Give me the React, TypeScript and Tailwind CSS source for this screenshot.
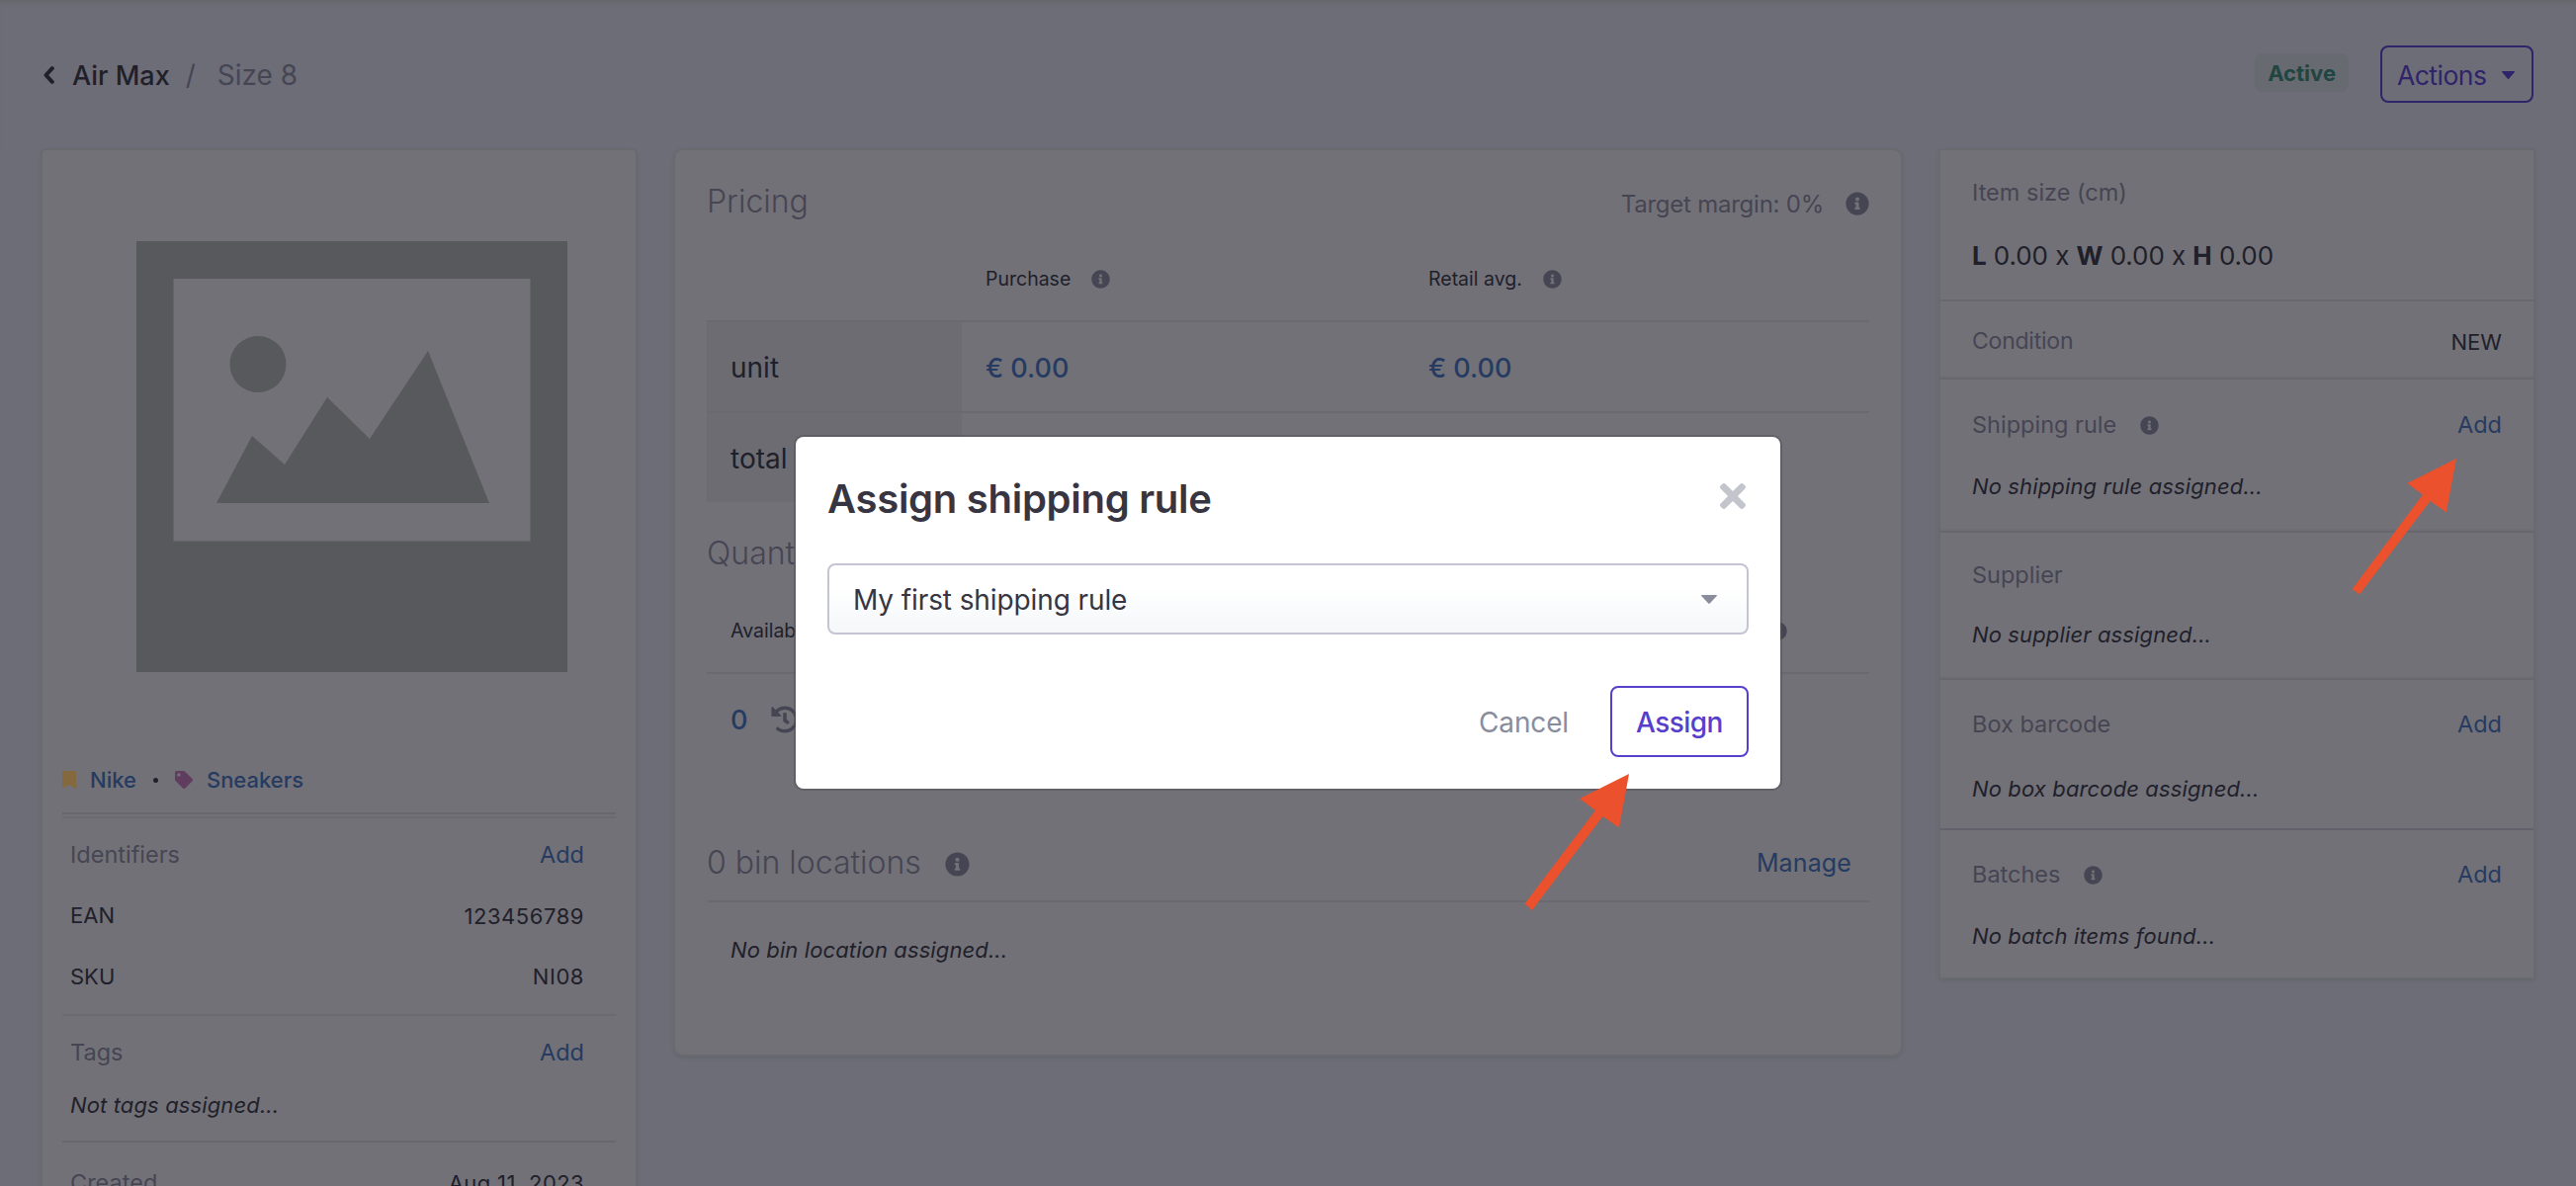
import type { ReactNode } from 'react'
import { FaHistory, FaInfoCircle, FaTag, FaTimes } from 'react-icons/fa'

type SideSection = {
  label: string
  text: string
  info?: boolean
  add?: boolean
  dividerClass: string
  labelClass: string
  textClass: string
}

const SIDE_SECTIONS: SideSection[] = [
  {
    label: 'Shipping rule',
    text: 'No shipping rule assigned...',
    info: true,
    add: true,
    dividerClass: 'h-1 border-t-2 border-[#6e6e74] bg-[#67676d]',
    labelClass: 'h-[90px]',
    textClass: 'mb-[26px] h-[35px]',
  },
  {
    label: 'Supplier',
    text: 'No supplier assigned...',
    dividerClass: 'h-1 border-t-2 border-[#6e6e74] bg-[#67676d]',
    labelClass: 'h-[84px]',
    textClass: 'mb-[23px] h-[38px]',
  },
  {
    label: 'Box barcode',
    text: 'No box barcode assigned...',
    add: true,
    dividerClass: 'h-1 border-t-2 border-[#6e6e74] bg-[#67676d]',
    labelClass: 'h-[88px]',
    textClass: 'mb-[19px] h-[43px]',
  },
  {
    label: 'Batches',
    text: 'No batch items found...',
    info: true,
    add: true,
    dividerClass: 'h-0.5 bg-[#62626d]',
    labelClass: 'h-[88px]',
    textClass: 'mb-[23px] h-[38px]',
  },
]

const CARD = 'bg-[#727177] shadow-[0_0_0_2px_#696a6e,0_2px_4px_rgba(60,60,66,0.3)]'

function Info({ className }: { className: string }) {
  return <FaInfoCircle className={`shrink-0 text-[#464553] ${className}`} />
}

function Label({ children, className = 'text-[23.5px]' }: { children: ReactNode; className?: string }) {
  return <span className={`leading-none text-[#464553] ${className}`}>{children}</span>
}

function Link({ children, className = 'text-[23.5px]' }: { children: ReactNode; className?: string }) {
  return (
    <a href="#" className={`leading-none text-[#263b61] ${className}`}>
      {children}
    </a>
  )
}

function Caret({ className }: { className: string }) {
  return (
    <svg viewBox="0 0 16 9" preserveAspectRatio="none" className={className} fill="currentColor">
      <path d="M0.6 0h14.8c0.5 0 0.8 0.6 0.4 1L8.7 8.6c-0.4 0.4-1 0.4-1.4 0L0.2 1c-0.4-0.4-0.1-1 0.4-1z" />
    </svg>
  )
}

function Bookmark() {
  return (
    <svg viewBox="0 0 14 18" className="h-[18px] w-[14px]" fill="#84693f">
      <path d="M0 18V1.500Q0 0 1.500 0h11Q14 0 14 1.500V18l-7-4z" />
    </svg>
  )
}

function Placeholder() {
  return (
    <svg viewBox="0 0 436 436" className="mt-[92px] ml-[95px] block size-[436px]">
      <path fill="#58595d" fillRule="evenodd" d="M0 0h436v436H0zM37.5 38v265.500h361V38z" />
      <circle cx="123" cy="124.500" r="28.500" fill="#58595d" />
      <path fill="#58595d" d="M81 265l36-68 33 29 43-68 43 42 59-89 62 154z" />
    </svg>
  )
}

function Header() {
  return (
    <header className="flex h-[152px] justify-between px-[43px] pt-[46px] shadow-[inset_0_5px_4px_-3px_#65666a]">
      <div className="flex h-[60px] items-center text-[27px] leading-none">
        <svg viewBox="0 0 12 18" className="mr-[17px] h-[18px] w-3" fill="none" stroke="#20202b" strokeWidth="4">
          <path d="M9.800 2.200L3.500 9l6.300 6.800" strokeLinecap="round" strokeLinejoin="round" />
        </svg>
        <span className="ml-px font-medium text-[#20202b]">Air Max</span>
        <span className="ml-4 text-[28px] text-[#464553]">/</span>
        <span className="ml-[22px] text-[28px] text-[#464553]">Size 8</span>
      </div>
      <div className="flex h-[58px] items-center">
        <span className="mr-8 -mt-[3px] flex h-[39px] items-center rounded-lg bg-[#676a71] px-[13px] text-[22px] leading-none font-bold text-[#214540]">
          Active
        </span>
        <button
          type="button"
          className="flex h-[58px] w-[155px] items-center rounded-lg border-2 border-[#2f2369] pt-[3px] pl-[15px] text-[26.5px] leading-none tracking-[-0.02em] text-[#2f2369]"
        >
          Actions
          <Caret className="-mt-[2px] ml-4 h-2 w-[13px]" />
        </button>
      </div>
    </header>
  )
}

function ItemRow({ label, value, className }: { label: string; value: string; className: string }) {
  return (
    <div className={`flex items-center justify-between pr-8 pl-2 text-[22px] leading-none text-[#20202b] ${className}`}>
      <span>{label}</span>
      <span className="pt-px tracking-[0.025em]">{value}</span>
    </div>
  )
}

function ItemHeading({ label }: { label: string }) {
  return (
    <div className="flex h-[73px] items-center justify-between pr-8 pl-2">
      <Label>{label}</Label>
      <Link>Add</Link>
    </div>
  )
}

function ItemCard() {
  return (
    <section className={`h-[1100px] w-[600px] rounded-t-[4px] ${CARD}`}>
      <Placeholder />
      <div className="mx-5 mt-[76px]">
        <div className="flex h-[66px] items-center text-[#20202b]">
          <Bookmark />
          <Link className="ml-[14px] text-[22px] font-medium">Nike</Link>
          <span className="mx-[17px] size-[5px] rounded-full bg-[#20202b]" />
          <FaTag className="size-[18px] text-[#603c5f]" />
          <Link className="ml-[14px] text-[22px] font-medium">Sneakers</Link>
        </div>
        <div className="mb-[2px] border-t-2 border-[#67676c]" />
        <div className="border-t-2 border-[#6a6a6f]">
          <ItemHeading label="Identifiers" />
          <ItemRow label="EAN" value="123456789" className="h-[50px]" />
          <ItemRow label="SKU" value="NI08" className="mb-[2px] h-[73px]" />
        </div>
        <div className="border-t-2 border-[#6a6a6f]">
          <ItemHeading label="Tags" />
          <p className="mb-[19px] flex h-[34px] items-center pl-2 text-[22px] leading-none tracking-[0.006em] text-[#20202b] italic">
            Not tags assigned...
          </p>
        </div>
        <div className="flex h-[83px] items-center justify-between border-t-2 border-[#67676c] pr-8 pl-2 leading-none">
          <Label>Created</Label>
          <span className="text-[22px] leading-none tracking-[0.018em] text-[#20202b]">Aug 11, 2023</span>
        </div>
      </div>
    </section>
  )
}

function PriceCell({ children }: { children: ReactNode }) {
  return (
    <div className="flex w-[448px] items-center pt-[2px] pl-[24px]">
      <Link className="text-[27px] font-medium">{children}</Link>
    </div>
  )
}

function ColumnHead({ label, className }: { label: string; className: string }) {
  return (
    <div className={`flex items-center pl-6 text-[19.5px] leading-none text-[#20202b] ${className}`}>
      <span className="pt-px">{label}</span>
      <Info className="ml-[21px] size-[19px]" />
    </div>
  )
}

function PricingCard() {
  return (
    <section className={`h-[915px] w-[1240px] rounded-lg px-8 ${CARD}`}>
      <div className="flex h-[102px] items-center justify-between text-[#464553]">
        <h2 className="pt-[2px] text-[32px] leading-none font-light">Pricing</h2>
        <div className="flex items-center pt-[7px] text-2xl leading-none tracking-[-0.01em]">
          Target margin: 0%
          <Info className="-mt-px ml-[22px] size-6" />
        </div>
      </div>
      <div className="mb-[14px] flex h-[56px] pl-[258px]">
        <ColumnHead label="Purchase" className="w-[448px]" />
        <ColumnHead label="Retail avg." className="w-[448px]" />
      </div>
      {['unit', 'total'].map((row) => (
        <div key={row} className="flex h-[92px] border-t-2 border-[#69696f]">
          <div className="flex w-[258px] items-center bg-[#6d6c72] pt-[2px] pl-[24px] text-[28px] leading-none text-[#20202b]">
            {row}
          </div>
          <PriceCell>€ 0.00</PriceCell>
          <PriceCell>€ 0.00</PriceCell>
        </div>
      ))}
      <h2 className="flex h-[102px] items-center pt-[2px] text-[32px] leading-none font-light text-[#464553]">
        Quantity
      </h2>
      <div className="mb-[14px] flex h-[56px] justify-between pr-[83px]">
        <ColumnHead label="Available" className="" />
        <ColumnHead label="Incoming" className="" />
      </div>
      <div className="flex h-[94px] items-center border-t-2 border-[#69696f] pl-6">
        <Link className="pt-px text-[27px] font-medium">0</Link>
        <FaHistory className="ml-[24px] size-7 text-[#464553]" />
      </div>
      <div className="mt-[59px] flex h-[80px] items-center border-b-2 border-[#69696f]">
        <h2 className="pt-[2px] text-[32px] leading-none font-light text-[#464553]">0 bin locations</h2>
        <Info className="mt-1 ml-6 size-[25px]" />
        <Link className="mr-[18px] ml-auto pt-[2px] text-[25px] tracking-[0.005em]">Manage</Link>
      </div>
      <p className="flex h-[95px] items-center pl-6 text-[22px] leading-none tracking-[0.005em] text-[#20202b] italic">
        No bin location assigned...
      </p>
    </section>
  )
}

function DetailsCard() {
  return (
    <section className={`h-[837px] w-[600px] ${CARD}`}>
      <div className="border-b-2 border-[#67676d] px-8">
        <div className="flex h-[84px] items-center pt-[2px]">
          <Label>Item size (cm)</Label>
        </div>
        <div className="mb-[23px] flex h-11 items-center pt-[2px] text-[26px] leading-none tracking-[-0.003em] text-[#20202b]">
          <p>
            <b>L</b> 0.00 x <b>W</b> 0.00 x <b>H</b> 0.00
          </p>
        </div>
      </div>
      <div className="flex h-[75px] items-center justify-between px-8 pt-1">
        <Label className="pt-[2px] text-[23px] tracking-[-0.01em]">Condition</Label>
        <span className="pt-[2px] text-[22px] leading-none text-[#20202b]">NEW</span>
      </div>
      {SIDE_SECTIONS.map((section) => (
        <div key={section.label}>
          <div className={section.dividerClass} />
          <div className={`flex items-center px-8 pt-[2px] ${section.labelClass}`}>
            <Label>{section.label}</Label>
            {section.info && <Info className="mt-px ml-6 size-[19px]" />}
            {section.add && <Link className="ml-auto text-[23.5px]">Add</Link>}
          </div>
          <p
            className={`flex items-center px-8 text-[22px] leading-none tracking-[0.006em] text-[#20202b] italic ${section.textClass}`}
          >
            {section.text}
          </p>
        </div>
      ))}
    </section>
  )
}

function AssignDialog() {
  return (
    <div className="absolute inset-0 flex items-start justify-center pt-[442px]">
      <div
        role="dialog"
        aria-label="Assign shipping rule"
        className="h-[356px] w-[996px] rounded-lg bg-white px-8 shadow-[0_0_0_2px_rgba(80,80,88,0.5)]"
      >
        <div className="flex h-[124px] items-center justify-between">
          <h1 className="pt-[2px] text-[40px] leading-none font-semibold tracking-[-0.007em] text-[#363541]">
            Assign shipping rule
          </h1>
          <FaTimes className="-mt-1 mr-[3px] h-[38px] w-[26px] text-[#c3c5cd]" />
        </div>
        <div className="mt-1 flex h-[72px] items-center justify-between rounded-lg border-2 border-[#c4c4d4] bg-linear-to-b from-white from-30% to-[#f5f7f9] pr-[30px] pl-6 text-[28px] leading-none tracking-[-0.1px] text-[#363541]">
          <span className="pt-[2px]">My first shipping rule</span>
          <Caret className="h-[9px] w-4 text-[#8a8b9b]" />
        </div>
        <div className="mt-[52px] flex h-[72px] items-center justify-end text-[28px] leading-none">
          <button type="button" className="mr-[42px] pt-[2px] tracking-[-0.005em] text-[#898d9b]">
            Cancel
          </button>
          <button
            type="button"
            className="flex h-[72px] w-[140px] items-center justify-center rounded-lg border-2 border-[#5640cb] pt-[2px] font-medium tracking-[-0.02em] text-[#5640cb]"
          >
            Assign
          </button>
        </div>
      </div>
    </div>
  )
}

function Arrows() {
  return (
    <svg viewBox="0 0 2606 1200" className="pointer-events-none absolute inset-0 h-full w-full" fill="#eb512d">
      <path d="M1648 783l-10 54.500-16.500-11.500-71.500 95-7.500-6.500L1614 820l-16-12z" />
      <path d="M2485 464l-10.200 54.300L2458.500 507 2387 601.500l-7.300-5.500L2451 500.500 2435.300 489z" />
    </svg>
  )
}

export default function App() {
  return (
    <div className="relative h-[1200px] w-[2606px] overflow-hidden bg-[#6d6d77] font-['Inter',sans-serif]">
      <Header />
      <main className="flex items-start gap-10 px-[43px]">
        <ItemCard />
        <PricingCard />
        <DetailsCard />
      </main>
      <AssignDialog />
      <Arrows />
    </div>
  )
}
